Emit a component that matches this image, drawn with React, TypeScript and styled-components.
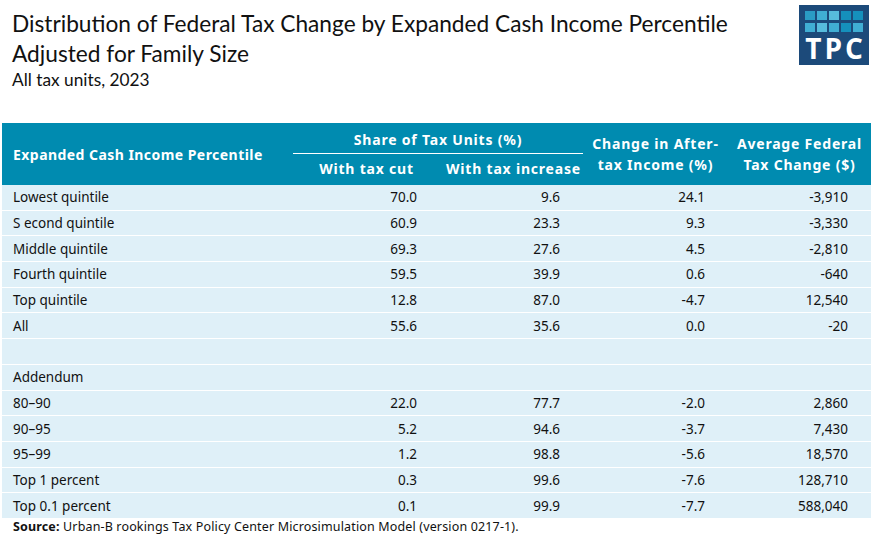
import React from "react";
import styled, { createGlobalStyle } from "styled-components";

const GlobalStyle = createGlobalStyle`
  body {
    margin: 0;
    background: #ffffff;
    font-family: "Lato", "Liberation Sans", sans-serif;
  }
`;

const Page = styled.div`
  width: 877px;
  height: 541px;
  overflow: hidden;
  padding: 0 6px 0 2px;
  box-sizing: border-box;
`;

const Header = styled.div`
  display: flex;
  justify-content: space-between;
  align-items: flex-start;
  height: 123px;
  padding-left: 10px;
`;

const Titles = styled.div`
  padding-top: 9px;
`;

const Title = styled.h1`
  margin: 0;
  font-family: "Lato", sans-serif;
  font-weight: 400;
  font-size: 22.7px;
  line-height: 30px;
  color: #111;
`;

const Subtitle = styled.div`
  font-size: 17.3px;
  line-height: 22px;
  color: #111;
`;

const Logo = styled.div`
  margin-top: 5px;
  margin-right: 2px;
  width: 70px;
  height: 60px;
  background: #1c4a7a;
  display: flex;
  flex-direction: column;
  align-items: center;
  padding-top: 6px;
  box-sizing: border-box;
`;

const LogoGrid = styled.div`
  display: grid;
  grid-template-columns: repeat(5, 10px);
  grid-auto-rows: 9px;
  gap: 3px 2px;
`;

const LogoCell = styled.div<{ $c: string }>`
  background: ${p => p.$c};
`;

const LogoText = styled.div`
  color: #ffffff;
  font-family: "Open Sans", "DejaVu Sans", sans-serif;
  font-weight: 700;
  font-size: 28px;
  line-height: 30px;
  letter-spacing: 3px;
  padding-left: 3px;
  margin-top: 1px;
`;

const Table = styled.table`
  width: 869px;
  border-collapse: collapse;
  table-layout: fixed;
  font-family: "Noto Sans", "DejaVu Sans", sans-serif;
`;

const Th = styled.th<{ $align?: string }>`
  background: #008bb0;
  color: #ffffff;
  font-weight: 700;
  font-size: 14px;
  letter-spacing: 0.8px;
  line-height: 21px;
  padding: 0 6px;
  text-align: ${p => p.$align || "center"};
  vertical-align: middle;
  white-space: nowrap;
`;

const LabelTh = styled(Th)`
  text-align: left;
  padding-left: 11px;
  letter-spacing: 0.45px;
`;

const GroupTh = styled(Th)`
  height: 27px;
  vertical-align: bottom;
  padding-bottom: 4px;
  position: relative;
`;

const Rule = styled.div`
  position: absolute;
  left: 0;
  right: 0;
  bottom: 0;
  height: 1px;
  background: #ffffff;
`;

const SubTh = styled(Th)`
  height: 27px;
  vertical-align: top;
  padding-top: 4px;
`;

const Row = styled.tr`
  background: #dff0f8;
  border-top: 1px solid #ffffff;
  &:first-child {
    border-top: 0;
  }
`;

const Td = styled.td<{ $num?: boolean }>`
  height: 24.7px;
  padding: 0 ${p => (p.$num ? "23px" : "11px")} 0 11px;
  font-size: 13.5px;
  color: #111;
  text-align: ${p => (p.$num ? "right" : "left")};
  white-space: nowrap;
`;

const Source = styled.div`
  font-family: "Noto Sans", "DejaVu Sans", sans-serif;
  font-size: 12.5px;
  letter-spacing: 0.15px;
  color: #111;
  padding: 0 0 0 11px;
  b {
    font-weight: 700;
  }
`;

const logoColors = [
  "#2a9cc4", "#40aed3", "#57bcdc", "#1590bc", "#1590bc",
  "#40aed3", "#57bcdc", "#40aed3", "#1590bc", "#40aed3",
];

const rows: string[][] = [
  ["Lowest quintile", "70.0", "9.6", "24.1", "-3,910"],
  ["S econd quintile", "60.9", "23.3", "9.3", "-3,330"],
  ["Middle quintile", "69.3", "27.6", "4.5", "-2,810"],
  ["Fourth quintile", "59.5", "39.9", "0.6", "-640"],
  ["Top quintile", "12.8", "87.0", "-4.7", "12,540"],
  ["All", "55.6", "35.6", "0.0", "-20"],
  ["", "", "", "", ""],
  ["Addendum", "", "", "", ""],
  ["80\u201390", "22.0", "77.7", "-2.0", "2,860"],
  ["90\u201395", "5.2", "94.6", "-3.7", "7,430"],
  ["95\u201399", "1.2", "98.8", "-5.6", "18,570"],
  ["Top 1 percent", "0.3", "99.6", "-7.6", "128,710"],
  ["Top 0.1 percent", "0.1", "99.9", "-7.7", "588,040"],
];

export default function App() {
  return (
    <Page>
      <GlobalStyle />
      <Header>
        <Titles>
          <Title>
            Distribution of Federal Tax Change by Expanded Cash Income Percentile
            <br />
            Adjusted for Family Size
          </Title>
          <Subtitle>All tax units, 2023</Subtitle>
        </Titles>
        <Logo>
          <LogoGrid>
            {logoColors.map((c, i) => (
              <LogoCell key={i} $c={c} />
            ))}
          </LogoGrid>
          <LogoText>TPC</LogoText>
        </Logo>
      </Header>
      <Table>
        <colgroup>
          <col style={{ width: 291 }} />
          <col style={{ width: 147 }} />
          <col style={{ width: 143 }} />
          <col style={{ width: 145 }} />
          <col style={{ width: 143 }} />
        </colgroup>
        <thead>
          <tr>
            <LabelTh rowSpan={2}>Expanded Cash Income Percentile</LabelTh>
            <GroupTh colSpan={2}>
              Share of Tax Units (%)
              <Rule />
            </GroupTh>
            <Th rowSpan={2}>
              Change in After-
              <br />
              tax Income (%)
            </Th>
            <Th rowSpan={2}>
              Average Federal
              <br />
              Tax Change ($)
            </Th>
          </tr>
          <tr>
            <SubTh>With tax cut</SubTh>
            <SubTh>With tax increase</SubTh>
          </tr>
        </thead>
        <tbody>
          {rows.map((r, i) => (
            <Row key={i}>
              {r.map((v, j) => (
                <Td key={j} $num={j > 0}>
                  {v}
                </Td>
              ))}
            </Row>
          ))}
        </tbody>
      </Table>
      <Source>
        <b>Source:</b> Urban-B rookings Tax Policy Center Microsimulation Model (version 0217-1).
      </Source>
    </Page>
  );
}
